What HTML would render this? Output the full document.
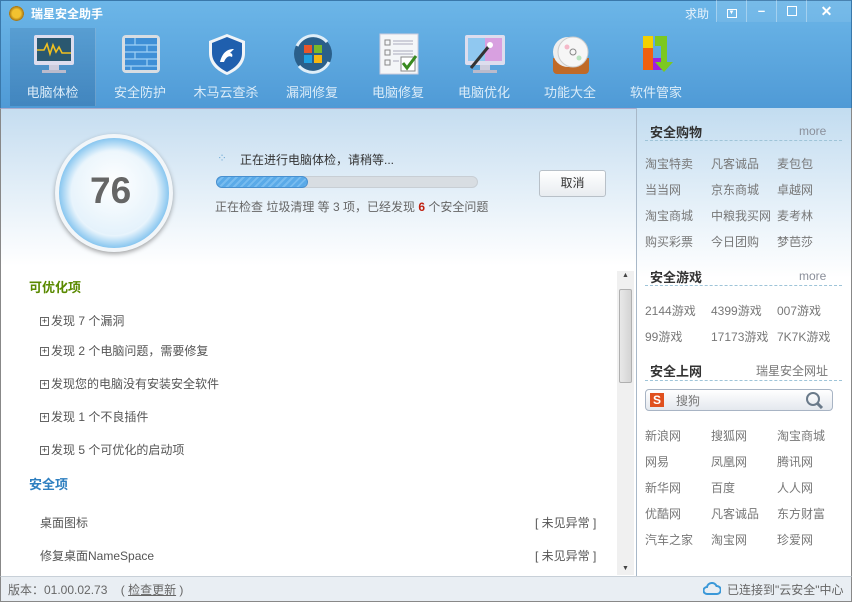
<!DOCTYPE html>
<html><head><meta charset="utf-8"><style>
*{margin:0;padding:0;box-sizing:border-box}
body{width:852px;height:602px;overflow:hidden;font-family:"Liberation Sans","Noto Sans CJK SC",sans-serif;font-size:12px;color:#444;background:#fff;position:relative}
.abs{position:absolute;white-space:nowrap}
#hdr{position:absolute;left:0;top:0;width:852px;height:108px;background:linear-gradient(#6cb6e8,#4f9ad6);border:1px solid #3a78aa;border-bottom:none}
.tb{position:absolute;top:28px;width:86px;height:78px;text-align:center;color:#dcecf8;font-size:13px}
.tb .ic{position:absolute;left:22px;top:4px;width:44px;height:44px}
.tb .lb{position:absolute;left:0;right:0;top:54px}
.sel{background:linear-gradient(rgba(30,80,130,.18),rgba(30,80,130,.28));border-right:1px solid rgba(255,255,255,.2)}
.wb{position:absolute;top:0;height:22px;width:30px;border-left:1px solid rgba(255,255,255,.35);color:#fff;text-align:center;font-size:13px;line-height:22px}
#left{position:absolute;left:0;top:108px;width:637px;height:468px;border-left:1px solid #888;border-top:1px solid #aac;}
#top{position:absolute;left:1px;top:109px;width:635px;height:157px;background:linear-gradient(#c5ddf0,#fff)}
#right{position:absolute;left:636px;top:108px;width:216px;height:468px;border-left:1px solid #a8b8c8;border-right:1px solid #888;background:linear-gradient(#c2dcf0 0,#fff 170px)}
.h{font-weight:bold;color:#333;font-size:13px}
.more{color:#8a8f9a;font-size:12px}
.dl{position:absolute;left:9px;width:197px;border-top:1px dashed #9ec4d8}
.lk{color:#777;font-size:12px}
.item{color:#555;font-size:12px}
.plus{display:inline-block;width:9px;height:9px;border:1px solid #666;font-size:9px;line-height:7px;text-align:center;margin-right:2px;vertical-align:1px;color:#333}
#foot{position:absolute;left:0;top:576px;width:852px;height:26px;background:#e9eef3;border:1px solid #888;border-top:1px solid #c8d0d8;color:#666}
</style></head><body>
<div id="hdr"></div>
<div class="abs" style="left:9px;top:6px;width:15px;height:15px;border-radius:50%;background:radial-gradient(#f2c230 40%,#a07010 70%,#fff 72%);"></div>
<div class="abs" style="left:31px;top:5px;color:#fff;font-weight:bold;font-size:12px">瑞星安全助手</div>
<div class="abs" style="left:685px;top:5px;color:#eaf4fc;font-size:12px">求助</div>
<div class="abs" style="left:716px;top:0;width:135px;height:22px;background:rgba(255,255,255,.08);border-bottom-left-radius:4px"></div>
<div class="wb" style="left:716px"><span style="display:inline-block;width:10px;height:9px;border:1px solid #fff;font-size:6px;line-height:6px;vertical-align:1px">▼</span></div>
<div class="wb" style="left:746px;font-weight:bold">–</div>
<div class="wb" style="left:776px"><span style="display:inline-block;width:10px;height:10px;border:1px solid #fff;vertical-align:-1px"></span></div>
<div class="wb" style="left:806px;width:40px;font-weight:bold;font-size:14px">✕</div>

<div class="tb sel" style="left:10px"><svg class="ic" viewBox="0 0 44 44"><rect x="2" y="3" width="40" height="30" rx="2" fill="#dde"/><rect x="5" y="6" width="34" height="23" fill="#2a5870"/><path d="M5 18h7l3-6 3 10 3-9 3 7 3-5 3 6h9" stroke="#f0c020" stroke-width="1.6" fill="none"/><rect x="17" y="33" width="10" height="5" fill="#ccd"/><rect x="10" y="38" width="24" height="3" fill="#bbc"/></svg><div class="lb">电脑体检</div></div>
<div class="tb" style="left:97px"><svg class="ic" viewBox="0 0 44 44"><rect x="3" y="3" width="38" height="38" rx="4" fill="#d8dde2"/><rect x="6" y="6" width="32" height="32" fill="#3f8fd6"/><path d="M6 13h32M6 20h32M6 27h32M6 34h32M16 6v7M28 13v7M16 20v7M28 27v7M12 34v4" stroke="#9fd0f5" stroke-width="1.2"/></svg><div class="lb">安全防护</div></div>
<div class="tb" style="left:183px"><svg class="ic" viewBox="0 0 44 44"><path d="M22 2L40 9v12c0 11-8 18-18 22C12 39 4 32 4 21V9z" fill="#f0f4f8"/><path d="M22 5L37 11v10c0 9-7 15-15 19C14 36 7 30 7 21V11z" fill="#1f5fae"/><path d="M15 30c2-8 6-13 14-13l-4 4c2 0 3 2 2 4-3-2-6 0-8 5z" fill="#fff"/></svg><div class="lb">木马云查杀</div></div>
<div class="tb" style="left:269px"><svg class="ic" viewBox="0 0 44 44"><circle cx="22" cy="22" r="19" fill="#2a5f8a"/><path d="M6 14a18 18 0 0 1 30-4" stroke="#dfeef8" stroke-width="3" fill="none"/><path d="M38 30a18 18 0 0 1-30 4" stroke="#dfeef8" stroke-width="3" fill="none"/><rect x="13" y="13" width="8" height="8" fill="#e8562a"/><rect x="23" y="13" width="8" height="8" fill="#7ab829"/><rect x="13" y="23" width="8" height="8" fill="#1fa0e0"/><rect x="23" y="23" width="8" height="8" fill="#f6b70f"/></svg><div class="lb">漏洞修复</div></div>
<div class="tb" style="left:355px"><svg class="ic" viewBox="0 0 44 44"><rect x="3" y="2" width="38" height="40" fill="#f4f6f8" stroke="#ccd"/><path d="M8 8h5v5H8zM8 18h5v5H8zM8 28h5v5H8z" fill="none" stroke="#888"/><path d="M16 9h20M16 12h20M16 19h20M16 22h20M16 29h6" stroke="#aab"/><rect x="24" y="25" width="14" height="14" fill="#fff" stroke="#888"/><path d="M26 31l4 5 9-12" stroke="#3a8a20" stroke-width="3" fill="none"/></svg><div class="lb">电脑修复</div></div>
<div class="tb" style="left:441px"><svg class="ic" viewBox="0 0 44 44"><rect x="2" y="3" width="40" height="30" rx="2" fill="#dde"/><rect x="5" y="6" width="34" height="23" fill="#d8a0e0"/><rect x="5" y="6" width="17" height="23" fill="#90c8f0"/><path d="M8 36L26 14" stroke="#333" stroke-width="3"/><circle cx="27" cy="13" r="3" fill="#fff"/><rect x="17" y="33" width="10" height="5" fill="#ccd"/><rect x="10" y="38" width="24" height="3" fill="#bbc"/></svg><div class="lb">电脑优化</div></div>
<div class="tb" style="left:527px"><svg class="ic" viewBox="0 0 44 44"><path d="M4 26h36v12a4 4 0 0 1-4 4H8a4 4 0 0 1-4-4z" fill="#c06a28"/><circle cx="19" cy="20" r="15" fill="#eee"/><circle cx="24" cy="20" r="15" fill="#f6f6f6" stroke="#ccc"/><circle cx="24" cy="20" r="3" fill="none" stroke="#888"/><circle cx="18" cy="15" r="2.5" fill="#f4b8c8"/><circle cx="30" cy="26" r="2.5" fill="#b8e4c0"/></svg><div class="lb">功能大全</div></div>
<div class="tb" style="left:613px"><svg class="ic" viewBox="0 0 44 44"><rect x="8" y="4" width="10" height="12" fill="#f4d000"/><rect x="8" y="16" width="10" height="22" fill="#f06010"/><rect x="18" y="26" width="10" height="12" fill="#a020e0"/><path d="M20 4h12v26h6l-9 10-9-10h6V14h-6z" fill="#7cc820"/></svg><div class="lb">软件管家</div></div>

<div id="left"></div>
<div id="top"></div>
<div class="abs" style="left:55px;top:134px;width:118px;height:118px;border-radius:50%;background:#f2f6f9;box-shadow:0 2px 5px rgba(0,0,0,.35)"></div>
<div class="abs" style="left:59px;top:138px;width:110px;height:110px;border-radius:50%;background:radial-gradient(circle,#e8f4fc 55%,#8cc8f0 70%,#3a9ce8 100%)"></div>
<div class="abs" style="left:72px;top:151px;width:84px;height:84px;border-radius:50%;background:radial-gradient(circle at 50% 40%,#fff,#dceefa)"></div>
<div class="abs" style="left:90px;top:170px;font-size:37px;font-weight:bold;color:#666">76</div>
<div class="abs" style="left:217px;top:151px;color:#7ab0d8;font-size:12px">⁘</div>
<div class="abs" style="left:240px;top:151px;color:#333">正在进行电脑体检，请稍等...</div>
<div class="abs" style="left:216px;top:176px;width:262px;height:12px;border-radius:6px;background:#d8dde2;border:1px solid #c8ced4"></div>
<div class="abs" style="left:216px;top:176px;width:92px;height:12px;border-radius:6px;background:repeating-linear-gradient(135deg,#5aaae8 0 3px,#78bcf0 3px 5px);border:1px solid #4890d0"></div>
<div class="abs" style="left:215px;top:198px;color:#666">正在检查 垃圾清理 等 3 项，已经发现 <b style="color:#c02010">6</b> 个安全问题</div>
<div class="abs" style="left:539px;top:170px;width:67px;height:27px;border:1px solid #b8c0c8;border-radius:3px;background:linear-gradient(#fff,#e8ecf0);text-align:center;line-height:25px;color:#333">取消</div>

<div class="abs" style="left:29px;top:277px;color:#5a8a00;font-weight:bold;font-size:13px">可优化项</div>
<div class="abs item" style="left:40px;top:312px"><span class="plus">+</span>发现 7 个漏洞</div>
<div class="abs item" style="left:40px;top:342px"><span class="plus">+</span>发现 2 个电脑问题，需要修复</div>
<div class="abs item" style="left:40px;top:375px"><span class="plus">+</span>发现您的电脑没有安装安全软件</div>
<div class="abs item" style="left:40px;top:408px"><span class="plus">+</span>发现 1 个不良插件</div>
<div class="abs item" style="left:40px;top:441px"><span class="plus">+</span>发现 5 个可优化的启动项</div>
<div class="abs" style="left:29px;top:474px;color:#2e7fc0;font-weight:bold;font-size:13px">安全项</div>
<div class="abs item" style="left:40px;top:514px">桌面图标</div>
<div class="abs item" style="left:40px;top:547px">修复桌面NameSpace</div>
<div class="abs item" style="left:535px;top:514px">[ 未见异常 ]</div>
<div class="abs item" style="left:535px;top:547px">[ 未见异常 ]</div>
<div class="abs" style="left:617px;top:271px;width:17px;height:304px;background:#f0f0f0"></div>
<div class="abs" style="left:619px;top:289px;width:13px;height:94px;background:linear-gradient(90deg,#e8e8e8,#d4d4d4);border:1px solid #b0b0b0;border-radius:2px"></div>
<div class="abs" style="left:622px;top:272px;font-size:7px;color:#444">▲</div>
<div class="abs" style="left:622px;top:565px;font-size:7px;color:#444">▼</div>

<div id="right"></div>
<div class="abs h" style="left:650px;top:122px">安全购物</div><div class="abs more" style="left:799px;top:124px">more</div>
<div class="dl" style="left:645px;top:140px"></div>
<div class="abs lk" style="left:645px;top:155px">淘宝特卖</div><div class="abs lk" style="left:711px;top:155px">凡客诚品</div><div class="abs lk" style="left:777px;top:155px">麦包包</div>
<div class="abs lk" style="left:645px;top:181px">当当网</div><div class="abs lk" style="left:711px;top:181px">京东商城</div><div class="abs lk" style="left:777px;top:181px">卓越网</div>
<div class="abs lk" style="left:645px;top:207px">淘宝商城</div><div class="abs lk" style="left:711px;top:207px">中粮我买网</div><div class="abs lk" style="left:777px;top:207px">麦考林</div>
<div class="abs lk" style="left:645px;top:233px">购买彩票</div><div class="abs lk" style="left:711px;top:233px">今日团购</div><div class="abs lk" style="left:777px;top:233px">梦芭莎</div>
<div class="abs h" style="left:650px;top:267px">安全游戏</div><div class="abs more" style="left:799px;top:269px">more</div>
<div class="dl" style="left:645px;top:285px"></div>
<div class="abs lk" style="left:645px;top:302px">2144游戏</div><div class="abs lk" style="left:711px;top:302px">4399游戏</div><div class="abs lk" style="left:777px;top:302px">007游戏</div>
<div class="abs lk" style="left:645px;top:328px">99游戏</div><div class="abs lk" style="left:711px;top:328px">17173游戏</div><div class="abs lk" style="left:777px;top:328px">7K7K游戏</div>
<div class="abs h" style="left:650px;top:361px">安全上网</div><div class="abs lk" style="left:756px;top:362px">瑞星安全网址</div>
<div class="dl" style="left:645px;top:380px"></div>
<div class="abs" style="left:645px;top:389px;width:188px;height:22px;border:1px solid #a8b4c4;border-radius:4px;background:linear-gradient(#fff,#e4e8ee)"></div>
<div class="abs" style="left:650px;top:393px;width:14px;height:14px;background:#e0501e;color:#fff;font-weight:bold;font-size:12px;line-height:14px;text-align:center">S</div>
<div class="abs" style="left:676px;top:392px;color:#777">搜狗</div>
<svg class="abs" style="left:805px;top:391px" width="20" height="18" viewBox="0 0 20 18"><circle cx="8" cy="8" r="6" fill="none" stroke="#6a7a8a" stroke-width="2"/><path d="M12 12l5 5" stroke="#6a7a8a" stroke-width="3"/></svg>
<div class="abs lk" style="left:645px;top:427px">新浪网</div><div class="abs lk" style="left:711px;top:427px">搜狐网</div><div class="abs lk" style="left:777px;top:427px">淘宝商城</div>
<div class="abs lk" style="left:645px;top:453px">网易</div><div class="abs lk" style="left:711px;top:453px">凤凰网</div><div class="abs lk" style="left:777px;top:453px">腾讯网</div>
<div class="abs lk" style="left:645px;top:479px">新华网</div><div class="abs lk" style="left:711px;top:479px">百度</div><div class="abs lk" style="left:777px;top:479px">人人网</div>
<div class="abs lk" style="left:645px;top:505px">优酷网</div><div class="abs lk" style="left:711px;top:505px">凡客诚品</div><div class="abs lk" style="left:777px;top:505px">东方财富</div>
<div class="abs lk" style="left:645px;top:531px">汽车之家</div><div class="abs lk" style="left:711px;top:531px">淘宝网</div><div class="abs lk" style="left:777px;top:531px">珍爱网</div>

<div id="foot"></div>
<div class="abs" style="left:8px;top:581px;color:#666">版本：01.00.02.73 &nbsp;&nbsp;&nbsp;( <u>检查更新</u> )</div>
<svg class="abs" style="left:703px;top:582px" width="18" height="13" viewBox="0 0 18 13"><path d="M4 12a3.5 3.5 0 0 1 0-7 5 5 0 0 1 9.5-1A4 4 0 0 1 14 12z" fill="none" stroke="#3a98d8" stroke-width="2"/></svg>
<div class="abs" style="left:727px;top:581px;color:#666">已连接到"云安全"中心</div>
</body></html>
